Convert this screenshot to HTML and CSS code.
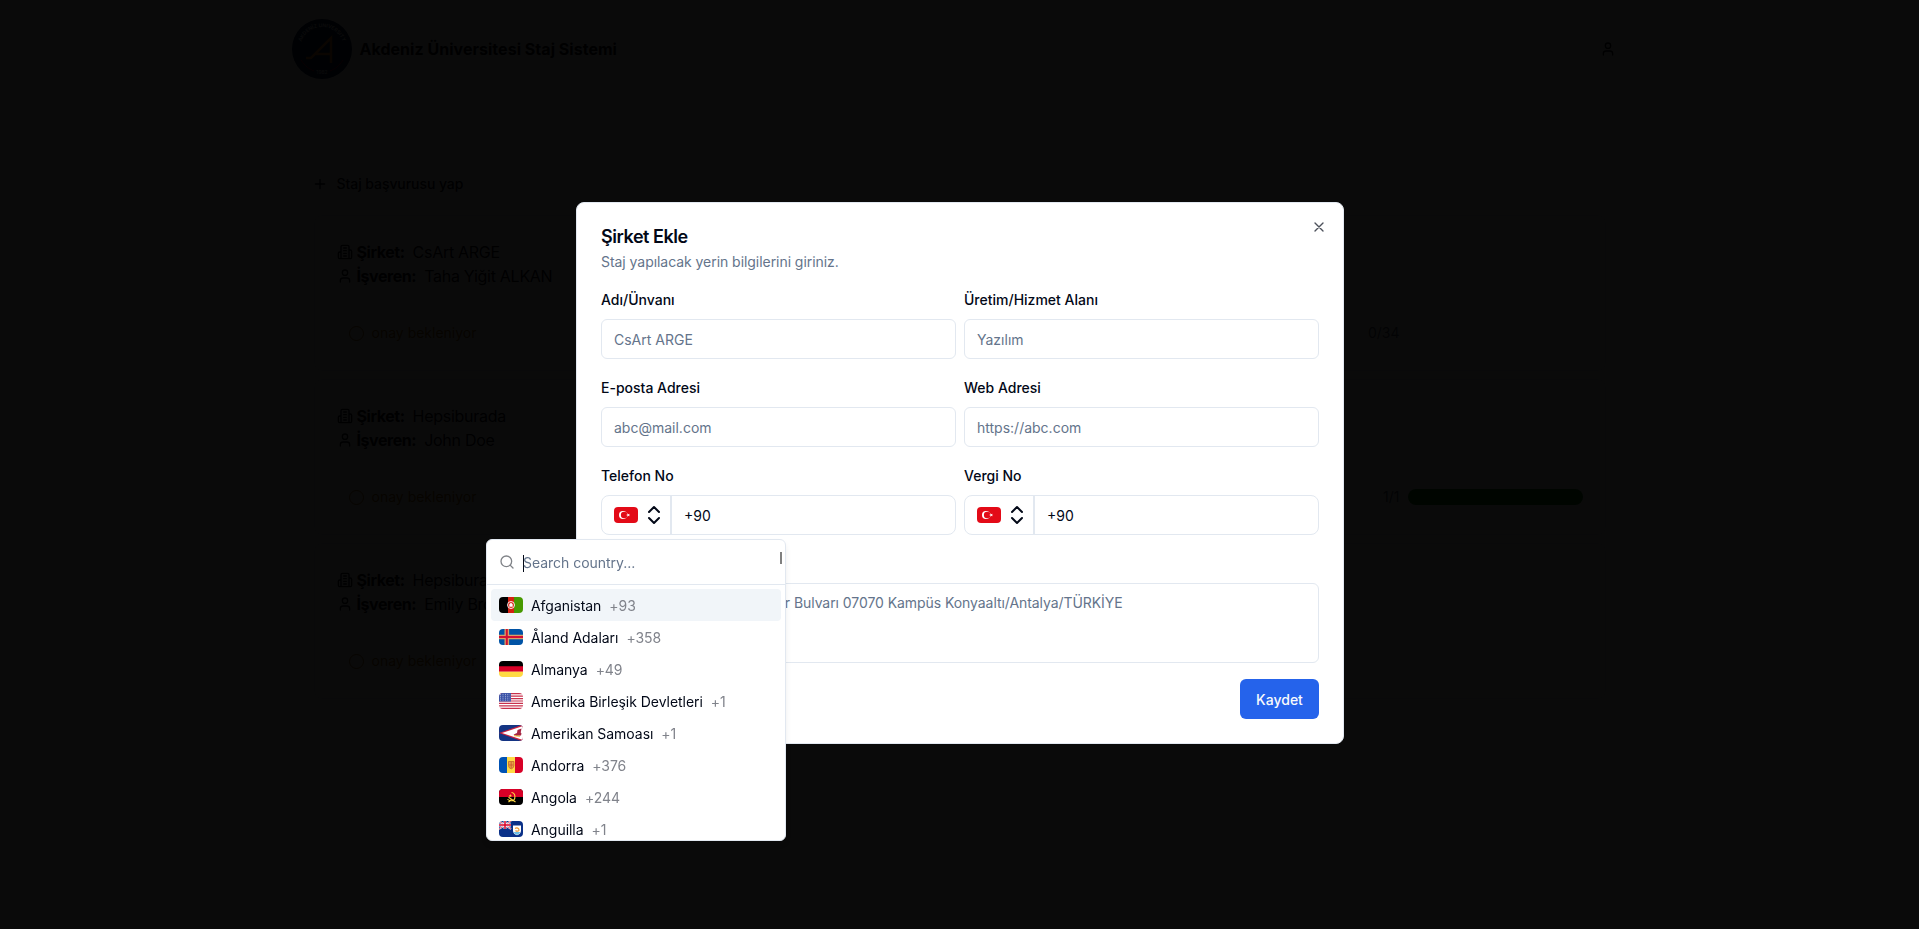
FILE: index.html
```html
<!DOCTYPE html>
<html lang="tr">
<head>
<meta charset="utf-8">
<title>Akdeniz Üniversitesi Staj Sistemi</title>
<link rel="stylesheet" href="styles.css">
</head>
<body>
<svg class="defs" width="0" height="0">
  <symbol id="building" viewBox="0 0 24 24"><path d="M6 22V4a2 2 0 0 1 2-2h8a2 2 0 0 1 2 2v18ZM6 12H4a2 2 0 0 0-2 2v6a2 2 0 0 0 2 2h2M18 9h2a2 2 0 0 1 2 2v9a2 2 0 0 1-2 2h-2M10 6h4M10 10h4M10 14h4M10 18h4"/></symbol>
  <symbol id="user" viewBox="0 0 24 24"><path d="M19 21v-2a4 4 0 0 0-4-4H9a4 4 0 0 0-4 4v2"/><circle cx="12" cy="7" r="4"/></symbol>
  <symbol id="updown" viewBox="0 0 24 24"><path d="m7 15 5 5 5-5M7 9l5-5 5 5"/></symbol>
  <symbol id="tr" viewBox="0 0 24 16"><path fill="#e30a17" d="M0 0h24v16H0z"/><circle cx="9" cy="8" r="4" fill="#fff"/><circle cx="10.100" cy="8" r="3.200" fill="#e30a17"/><path fill="#fff" d="m12 8 1.500-.5V6l.9 1.200 1.500-.4-.9 1.200.9 1.200-1.500-.4-.9 1.200V8.500z"/></symbol>
</svg>

<div class="page">
  <header class="topbar">
    <svg class="logo" viewBox="0 0 60 60">
      <circle cx="30" cy="30" r="30" fill="#001a4d"/>
      <path id="arc" d="M8 30a22 22 0 0 1 44 0" fill="none"/>
      <text class="logo-text" text-anchor="middle"><textPath href="#arc" startOffset="50%">AKDENİZ UNIVERSITY</textPath></text>
      <path d="M14 39h5L39 19v25M24 35h14" fill="none" stroke="#f58220" stroke-width="2.500"/>
      <path d="M9 41c4 6 8 9 13 11M51 41c-4 6-8 9-13 11" fill="none" stroke="#c8102e"/>
      <text class="logo-year" x="30" y="55" text-anchor="middle">1982</text>
    </svg>
    <h1>Akdeniz Üniversitesi Staj Sistemi</h1>
    <svg class="icon profile"><use href="#user"/></svg>
  </header>
  <main class="content">
    <div class="apply"><svg class="icon" viewBox="0 0 24 24"><path d="M5 12h14M12 5v14"/></svg>Staj başvurusu yap</div>
    <section class="card">
      <p><svg class="icon"><use href="#building"/></svg><b>Şirket:</b><span>CsArt ARGE</span></p>
      <p><svg class="icon"><use href="#user"/></svg><b>İşveren:</b><span>Taha Yiğit ALKAN</span></p>
      <div class="status"><i class="ring"></i>onay bekleniyor<span class="count">0/34</span><span class="bar"></span></div>
    </section>
    <section class="card">
      <p><svg class="icon"><use href="#building"/></svg><b>Şirket:</b><span>Hepsiburada</span></p>
      <p><svg class="icon"><use href="#user"/></svg><b>İşveren:</b><span>John Doe</span></p>
      <div class="status"><i class="ring"></i>onay bekleniyor<span class="count">1/1</span><span class="bar full"></span></div>
    </section>
    <section class="card">
      <p><svg class="icon"><use href="#building"/></svg><b>Şirket:</b><span>Hepsiburada</span></p>
      <p><svg class="icon"><use href="#user"/></svg><b>İşveren:</b><span>Emily Brown</span></p>
      <div class="status"><i class="ring"></i>onay bekleniyor</div>
    </section>
  </main>
</div>

<div class="overlay">
  <div class="dialog">
    <svg class="icon close" viewBox="0 0 24 24"><path d="M18 6 6 18M6 6l12 12"/></svg>
    <h2>Şirket Ekle</h2>
    <p class="description">Staj yapılacak yerin bilgilerini giriniz.</p>
    <div class="form">
      <div class="field"><label>Adı/Ünvanı</label><div class="input">CsArt ARGE</div></div>
      <div class="field"><label>Üretim/Hizmet Alanı</label><div class="input">Yazılım</div></div>
      <div class="field"><label>E-posta Adresi</label><div class="input">abc@mail.com</div></div>
      <div class="field"><label>Web Adresi</label><div class="input">https://abc.com</div></div>
      <div class="field"><label>Telefon No</label>
        <div class="phone"><div class="country"><svg class="flag"><use href="#tr"/></svg><svg class="icon chevrons"><use href="#updown"/></svg></div><div class="number">+90</div></div></div>
      <div class="field"><label>Vergi No</label>
        <div class="phone"><div class="country"><svg class="flag"><use href="#tr"/></svg><svg class="icon chevrons"><use href="#updown"/></svg></div><div class="number">+90</div></div></div>
      <div class="field wide"><label>Adres</label><div class="input area">Pınarbaşı Mah. Dumlupınar Bulvarı 07070 Kampüs Konyaaltı/Antalya/TÜRKİYE</div></div>
    </div>
    <div class="actions"><button class="save">Kaydet</button></div>
  </div>
</div>

<div class="menu">
  <div class="search"><svg class="icon" viewBox="0 0 24 24"><circle cx="11" cy="11" r="8"/><path d="m21 21-4.300-4.300"/></svg><span class="caret"></span>Search country...</div>
  <div class="thumb"></div>
  <div class="list">
    <div class="option active"><svg class="flag" viewBox="0 0 24 16"><path d="M0 0h9v16H0z"/><path fill="#d32011" d="M9 0h6v16H9z"/><path fill="#479900" d="M15 0h9v16h-9z"/><circle cx="12" cy="8" r="3.500" fill="none" stroke="#fff" stroke-width=".9"/><path fill="#fff" d="M10.300 9.800V7.300L12 5.800l1.700 1.500v2.500z"/></svg><b>Afganistan</b><span>+93</span></div>
    <div class="option"><svg class="flag" viewBox="0 0 24 16"><path fill="#0053a5" d="M0 0h24v16H0z"/><path stroke="#d9a066" stroke-width="4.600" d="M7.800 0v16M0 8h24"/><path stroke="#d21034" stroke-width="2" d="M7.800 0v16M0 8h24"/></svg><b>Åland Adaları</b><span>+358</span></div>
    <div class="option"><svg class="flag" viewBox="0 0 24 16"><path d="M0 0h24v6H0z"/><path fill="#d80027" d="M0 5.330h24v5.340H0z"/><path fill="#ffda44" d="M0 10.670h24V16H0z"/></svg><b>Almanya</b><span>+49</span></div>
    <div class="option"><svg class="flag" viewBox="0 0 24 16"><path fill="#fff" d="M0 0h24v16H0z"/><path stroke="#c8304c" stroke-width="1.230" d="M0 .6h24M0 3.080h24M0 5.540h24M0 8h24M0 10.460h24M0 12.920h24M0 15.400h24"/><path fill="#3c54a8" d="M0 0h12v8.600H0z"/><path stroke="#dfe4f4" stroke-width=".8" stroke-dasharray=".8 1.600" d="M1.200 1.400h10M1.200 3.300h10M1.200 5.200h10M1.200 7.100h10"/></svg><b>Amerika Birleşik Devletleri</b><span>+1</span></div>
    <div class="option"><svg class="flag" viewBox="0 0 24 16"><path fill="#143483" d="M0 0h24v16H0z"/><path fill="#c8203e" d="M0 8 24-.5v17z"/><path fill="#fff" d="M3 8 24 1v14z"/><path fill="#a62643" d="m22.500 3.500-4 1.500-.5 3-3.500 1.500 3 1.300 4.500-.3.500-2-.8-1z"/><path stroke="#e7a51c" stroke-width="1" d="m15 10.700 6 .5"/></svg><b>Amerikan Samoası</b><span>+1</span></div>
    <div class="option"><svg class="flag" viewBox="0 0 24 16"><path fill="#0052b4" d="M0 0h8.500v16H0z"/><path fill="#ffda44" d="M8 0h8v16H8z"/><path fill="#d80027" d="M16 0h8v16h-8z"/><path fill="#e9a246" stroke="#c46a28" stroke-width=".8" d="M9.500 4.500h5.400v4.200q0 2.300-2.700 3.200-2.700-.9-2.700-3.200z"/><path stroke="#c4502c" stroke-width=".7" d="M12.200 5v6M10 8h4.500"/></svg><b>Andorra</b><span>+376</span></div>
    <div class="option"><svg class="flag" viewBox="0 0 24 16"><path d="M0 0h24v16H0z"/><path fill="#d80027" d="M0 0h24v8H0z"/><path fill="none" stroke="#ffda44" stroke-width="1.100" d="M12.500 3.500c4.500.5 4.500 8 .2 8.200-1.700.2-3-.4-4.200-1.300M9.500 8.300l7 4.700M9.500 13l2.500-2"/><path fill="#ffda44" d="m11.300 5 .5 1.200h1.200l-1 .8.400 1.200-1.100-.7-1.100.7.400-1.200-1-.8h1.200z"/></svg><b>Angola</b><span>+244</span></div>
    <div class="option"><svg class="flag" viewBox="0 0 24 16"><path fill="#0b3188" d="M0 0h24v16H0z"/><path stroke="#fff" stroke-width="1.800" d="m0 0 12 8M12 0 0 8"/><path stroke="#d80027" stroke-width=".7" d="m0 0 12 8M12 0 0 8"/><path stroke="#fff" stroke-width="2.800" d="M6 0v8M0 4h12"/><path stroke="#d80027" stroke-width="1.500" d="M6 0v8M0 4h12"/><path fill="#fff" d="M14 4.500h8v5q0 3.500-4 4.800-4-1.300-4-4.800z"/><path fill="#6cbfe8" d="M14.500 11h7q-1 2-3.500 3-2.500-1-3.500-3z"/><path fill="none" stroke="#f09a35" stroke-width="1.200" d="M16 7.500c2-1.500 4 0 4 1.500s-2.500 1.500-3.500.5"/></svg><b>Anguilla</b><span>+1</span></div>
  </div>
</div>
</body>
</html>
```

FILE: styles.css
```css
* { box-sizing: border-box; margin: 0; padding: 0; }

body {
  height: 929px;
  overflow: hidden;
  background: #fff;
  color: #020817;
  font: 14px/20px Inter, "Liberation Sans", sans-serif;
}

.defs { position: absolute; }

.icon {
  width: 16px;
  height: 16px;
  flex: none;
  fill: none;
  stroke: currentColor;
  stroke-width: 2;
  stroke-linecap: round;
  stroke-linejoin: round;
}

.page { width: 1336px; margin: 0 auto; }

.topbar { display: flex; align-items: center; gap: 8px; height: 98px; }
.topbar h1 { flex: 1; font-size: 16px; line-height: 24px; font-weight: 700; letter-spacing: .03px; }
.logo { width: 60px; height: 60px; }
.logo-text { font-size: 5px; fill: #fff; font-weight: 600; }
.logo-year { font-size: 5px; fill: #fff; }
.profile { margin-right: 12px; }

.content { display: flex; flex-direction: column; gap: 8px; padding: 66px 22px 0; }
.apply { display: flex; align-items: center; gap: 9px; height: 40px; margin: 0 0 3px -2px; font-weight: 500; letter-spacing: -.06px; }

.card {
  height: 156px;
  padding: 24px 22px;
  border: 1px solid #e2e8f0;
  border-radius: 8px;
}
.card p { display: flex; align-items: center; gap: 4px; font-size: 16px; line-height: 24px; letter-spacing: -.28px; }
.card b { font-weight: 700; letter-spacing: -.45px; }
.card p span { margin-left: 4px; }
.status { display: flex; align-items: center; height: 20px; margin: 35px 0 0 12px; color: #a16207; }
.ring { width: 15px; height: 15px; margin-right: 8px; border: 1.500px solid; border-radius: 50%; }
.count { width: 64px; margin-left: auto; color: #475569; text-align: right; }
.bar { width: 175px; height: 16px; margin-left: 8px; border-radius: 8px; }
.full { background: #007a10; }

.overlay {
  position: fixed;
  inset: 0;
  display: flex;
  justify-content: center;
  align-items: flex-start;
  padding: 202px 0 0 1px;
  background: rgba(0, 0, 0, .96);
}

.dialog {
  position: relative;
  width: 768px;
  height: 542px;
  padding: 25px 24px 24px;
  border: 1px solid #e2e8f0;
  border-radius: 8px;
  background: #fff;
}
.dialog h2 { font-size: 18px; line-height: 18px; font-weight: 600; letter-spacing: -.45px; }
.description { margin: 6px 0 15px; color: #64748b; letter-spacing: -.05px; }
.close { position: absolute; top: 16px; right: 16px; opacity: .7; }

.form { display: grid; grid-template-columns: 1fr 1fr; gap: 16px 8px; }
.field label { display: block; margin-bottom: 7px; padding-top: 1px; line-height: 24px; font-weight: 500; }
.wide { grid-column: 1 / -1; }
.input {
  height: 40px;
  padding: 10px 12px 8px;
  border: 1px solid #e2e8f0;
  border-radius: 6px;
  color: #64748b;
}
.area { height: 80px; padding-top: 9px; letter-spacing: -.065px; }

.phone { display: flex; height: 40px; border: 1px solid #e2e8f0; border-radius: 8px; }
.country { display: flex; align-items: center; gap: 8px; width: 69px; padding-left: 12px; border-right: 1px solid #e2e8f0; }
.number { flex: 1; padding: 10px 12px 8px; border-left: 1px solid #e2e8f0; }
.chevrons { width: 24px; height: 24px; margin-left: -4px; }
.flag { display: block; flex: none; width: 24px; height: 16px; border-radius: 4px; }

.actions { display: flex; justify-content: flex-end; margin-top: 16px; }
.save {
  width: 79px;
  height: 40px;
  padding-top: 2px;
  border: 0;
  border-radius: 6px;
  background: #2563eb;
  color: #f8fafc;
  font: 500 14px/20px Inter, sans-serif;
}

.menu {
  position: absolute;
  left: 486px;
  top: 539px;
  width: 300px;
  height: 302px;
  overflow: hidden;
  border: 1px solid #e2e8f0;
  border-radius: 6px;
  background: #fff;
  box-shadow: 0 4px 6px -1px rgba(0, 0, 0, .1);
}
.search { display: flex; align-items: center; height: 45px; padding: 2px 12px 0; border-bottom: 1px solid #e2e8f0; color: #64748b; letter-spacing: -.03px; }
.search .icon { margin: -3px 8px 0 0; color: #808388; }
.caret { width: 1px; height: 17px; margin-right: -1px; background: #020817; }
.thumb { position: absolute; right: 3px; top: 12px; width: 2px; height: 12px; background: #808080; }
.list { padding: 4px; }
.option { display: flex; align-items: center; gap: 8px; height: 32px; padding: 0 8px; border-radius: 4px; }
.option b, .option span { padding-top: 2px; font-weight: 400; letter-spacing: -.04px; }
.option span { color: #80838b; }
.active { background: #f1f5f9; }
```
